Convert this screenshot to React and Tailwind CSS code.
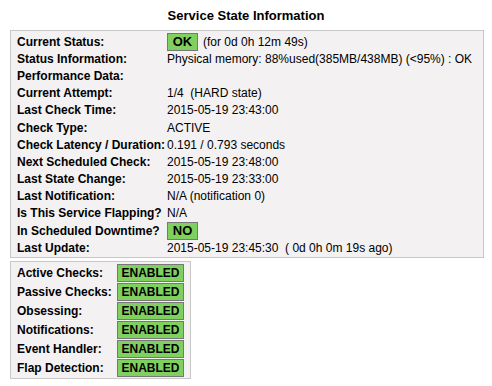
const rows = [
  ["Current Status:", "ok"],
  ["Status Information:", "Physical memory: 88%used(385MB/438MB) (<95%) : OK"],
  ["Performance Data:", ""],
  ["Current Attempt:", "1/4\u00a0\u00a0(HARD state)"],
  ["Last Check Time:", "2015-05-19 23:43:00"],
  ["Check Type:", "ACTIVE"],
  ["Check Latency / Duration:", "0.191\u00a0/\u00a00.793 seconds"],
  ["Next Scheduled Check:", "2015-05-19 23:48:00"],
  ["Last State Change:", "2015-05-19 23:33:00"],
  ["Last Notification:", "N/A (notification 0)"],
  ["Is This Service Flapping?", "N/A"],
  ["In Scheduled Downtime?", "no"],
  ["Last Update:", "2015-05-19 23:45:30\u00a0\u00a0( 0d 0h 0m 19s ago)"],
];

const checks = [
  "Active Checks:",
  "Passive Checks:",
  "Obsessing:",
  "Notifications:",
  "Event Handler:",
  "Flap Detection:",
];

function Badge({ children, className = "" }) {
  return (
    <span
      className={`inline-block bg-[#80d060] border border-[#777777] font-bold text-black leading-[16px] text-center ${className}`}
    >
      {children}
    </span>
  );
}

function Value({ v }) {
  if (v === "ok")
    return (
      <span className="flex items-center gap-[5px]">
        <Badge className="w-[31px] text-[13px]">OK</Badge>
        <span>(for 0d 0h 12m 49s)</span>
      </span>
    );
  if (v === "no") return <Badge className="w-[31px] text-[13px]">NO</Badge>;
  return <span>{v}</span>;
}

export default function App() {
  return (
    <div className="w-[492px] h-[386px] bg-white text-[12px] text-black font-['Liberation_Sans',Arial,sans-serif]">
      <div className="pt-[6px] text-center font-bold text-[13px] leading-[20px]">
        Service State Information
      </div>
      <div className="mt-[4px] ml-[10px] w-[474px] bg-[#f3f1f2] border border-[#c7c7c7] pl-[6px] pt-[2px] pb-[1px]">
        {rows.map(([label, v]) => (
          <div key={label} className="flex items-center h-[17.2px]">
            <div className="w-[150px] font-bold shrink-0">{label}</div>
            <Value v={v} />
          </div>
        ))}
      </div>
      <div className="mt-[3px] ml-[10px] w-[181px] bg-[#f3f1f2] border border-[#c7c7c7] pl-[6px] pt-[1px] pb-[1px]">
        {checks.map((c) => (
          <div key={c} className="flex items-center h-[19px]">
            <div className="w-[100px] font-bold shrink-0">{c}</div>
            <Badge className="w-[67px] text-[12px]">ENABLED</Badge>
          </div>
        ))}
      </div>
    </div>
  );
}
